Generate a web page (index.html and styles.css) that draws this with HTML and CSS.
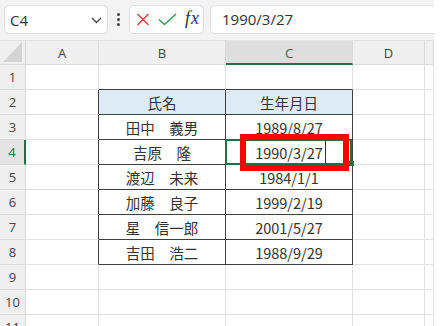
FILE: index.html
```html
<!DOCTYPE html>
<html lang="ja">
<head>
<meta charset="utf-8">
<link rel="stylesheet" href="styles.css">
</head>
<body>
<div class="app">
  <div class="toolbar">
    <div class="namebox">
      <span class="ref">C4</span>
      <svg class="chev" width="11" height="7" viewBox="0 0 11 7"><path d="M1 1 L5.5 5.5 L10 1" fill="none" stroke="#444" stroke-width="1.3"/></svg>
    </div>
    <div class="dots"><i></i><i></i><i></i></div>
    <div class="fbuttons">
      <svg class="ico" width="14" height="13" viewBox="0 0 14 13"><path d="M1.5 1 L12.5 12 M12.5 1 L1.5 12" stroke="#e0454a" stroke-width="1.6" fill="none"/></svg>
      <svg class="ico" width="19" height="13" viewBox="0 0 19 13"><path d="M1 6.5 L6.5 11.5 L18 1" stroke="#3d9a5c" stroke-width="1.6" fill="none"/></svg>
      <span class="fx">fx</span>
    </div>
    <div class="formula">1990/3/27</div>
  </div>
  <div class="sheet">
    <div class="hd corner"><svg width="20" height="21" viewBox="0 0 20 21"><path d="M19 1 L19 21 L0 21 Z" fill="#d4d4d4"/></svg></div>
    <div class="hd col">A</div>
    <div class="hd col">B</div>
    <div class="hd col cur">C</div>
    <div class="hd col">D</div>
    <div class="hd col"></div>

    <div class="hd row">1</div>
    <div class="c"></div><div class="c tb"></div><div class="c tb"></div><div class="c"></div><div class="c"></div>

    <div class="hd row">2</div>
    <div class="c tr"></div><div class="c t th">氏名</div><div class="c t th">生年月日</div><div class="c"></div><div class="c"></div>

    <div class="hd row">3</div>
    <div class="c tr"></div><div class="c t">田中　義男</div><div class="c t">1989/8/27</div><div class="c"></div><div class="c"></div>

    <div class="hd row cur">4</div>
    <div class="c tr"></div><div class="c t">吉原　隆</div><div class="c t">1990/3/27</div><div class="c"></div><div class="c"></div>

    <div class="hd row">5</div>
    <div class="c tr"></div><div class="c t">渡辺　未来</div><div class="c t">1984/1/1</div><div class="c"></div><div class="c"></div>

    <div class="hd row">6</div>
    <div class="c tr"></div><div class="c t">加藤　良子</div><div class="c t">1999/2/19</div><div class="c"></div><div class="c"></div>

    <div class="hd row">7</div>
    <div class="c tr"></div><div class="c t">星　信一郎</div><div class="c t">2001/5/27</div><div class="c"></div><div class="c"></div>

    <div class="hd row">8</div>
    <div class="c tr"></div><div class="c t">吉田　浩二</div><div class="c t">1988/9/29</div><div class="c"></div><div class="c"></div>

    <div class="hd row">9</div>
    <div class="c"></div><div class="c"></div><div class="c"></div><div class="c"></div><div class="c"></div>

    <div class="hd row">10</div>
    <div class="c"></div><div class="c"></div><div class="c"></div><div class="c"></div><div class="c"></div>

    <div class="hd row">11</div>
    <div class="c"></div><div class="c"></div><div class="c"></div><div class="c"></div><div class="c"></div>

    <div class="sel"></div>
    <div class="handle"></div>
    <div class="caret"></div>
    <div class="redbox"></div>
  </div>
</div>
</body>
</html>
```

FILE: styles.css
```css
html, body {
  margin: 0;
  padding: 0;
  background: #ffffff;
  overflow: hidden;
}
body {
  width: 445px;
  height: 326px;
  font-family: "Noto Sans", "Noto Sans CJK JP", sans-serif;
  color: #333;
}
.app {
  width: 434px;
}
.toolbar {
  height: 40px;
  box-sizing: border-box;
  background: #f3f3f3;
  padding: 5px 0 0 4px;
  display: flex;
  align-items: flex-start;
}
.namebox {
  width: 104px;
  height: 29px;
  box-sizing: border-box;
  background: #fff;
  border: 1px solid #e0e0e0;
  border-radius: 5px;
  display: flex;
  align-items: center;
  justify-content: space-between;
  padding: 0 5px 0 5px;
}
.ref {
  font-size: 15px;
  color: #333;
  font-family: "Open Sans", "Noto Sans", sans-serif;
}
.chev {
  margin-top: 1px;
}
.dots {
  width: 21px;
  height: 29px;
  display: flex;
  flex-direction: column;
  align-items: center;
  justify-content: center;
  gap: 2px;
}
.dots i {
  display: block;
  width: 3px;
  height: 3px;
  border-radius: 50%;
  background: #444;
}
.fbuttons {
  width: 75px;
  height: 29px;
  box-sizing: border-box;
  background: #fff;
  border: 1px solid #e0e0e0;
  border-radius: 5px;
  display: flex;
  align-items: center;
  padding: 0 0 0 6px;
  gap: 8px;
}
.fx {
  font-family: "Liberation Serif", serif;
  font-style: italic;
  font-size: 18px;
  color: #333;
  margin-left: 0px;
  margin-top: -2px;
  letter-spacing: 1px;
}
.formula {
  margin-left: 6px;
  flex: 1;
  height: 29px;
  box-sizing: border-box;
  background: #fff;
  border: 1px solid #e0e0e0;
  border-right: none;
  border-radius: 5px 0 0 5px;
  padding-left: 11px;
  font-size: 15px;
  line-height: 27px;
  font-family: "Open Sans", "Noto Sans", sans-serif;
  color: #333;
}
.sheet {
  position: relative;
  display: grid;
  grid-template-columns: 26px 73px 127px 127px 72px 9px;
  grid-auto-rows: 25px;
}
.hd {
  box-sizing: border-box;
  background: #f0f0f0;
  border-right: 1px solid #dadada;
  border-bottom: 1px solid #dadada;
  font-size: 13px;
  color: #444;
  display: flex;
  align-items: center;
  justify-content: center;
  font-family: "Open Sans", "Noto Sans", sans-serif;
}
.hd.col {
  border-top: 1px solid #e2e2e2;
  padding-top: 1px;
}
.hd.corner {
  border-top: 1px solid #e2e2e2;
  justify-content: flex-end;
  align-items: flex-end;
  padding: 0 2px 2px 0;
}
.hd.corner svg {
  display: block;
}
.hd.col.cur {
  background: #dedede;
  color: #1e7145;
  border-bottom: 2px solid #1e7145;
}
.hd.row.cur {
  color: #1e7145;
  background: #e4e4e4;
  border-right: 2px solid #1e7145;
}
.c {
  box-sizing: border-box;
  border-right: 1px solid #e2e2e2;
  border-bottom: 1px solid #e2e2e2;
  font-family: "Noto Sans CJK JP", sans-serif;
  font-size: 14.5px;
  color: #333;
  display: flex;
  align-items: center;
  justify-content: center;
}
.c.t {
  border-right-color: #3f3f3f;
  border-bottom-color: #3f3f3f;
}
.c.th {
  background: #ddebf7;
}
.c.tr {
  border-right-color: #3f3f3f;
}
.c.tb {
  border-bottom-color: #3f3f3f;
}
.sel {
  position: absolute;
  left: 225px;
  top: 99px;
  width: 127px;
  height: 26px;
  box-sizing: border-box;
  border: 2px solid #1e7145;
}
.handle {
  position: absolute;
  left: 349px;
  top: 121px;
  width: 5px;
  height: 5px;
  background: #1e7145;
}
.caret {
  position: absolute;
  left: 325px;
  top: 101px;
  width: 1px;
  height: 22px;
  background: #333;
}
.redbox {
  position: absolute;
  left: 240px;
  top: 94px;
  width: 109px;
  height: 37px;
  box-sizing: border-box;
  border: 6px solid #ff0000;
}
```
